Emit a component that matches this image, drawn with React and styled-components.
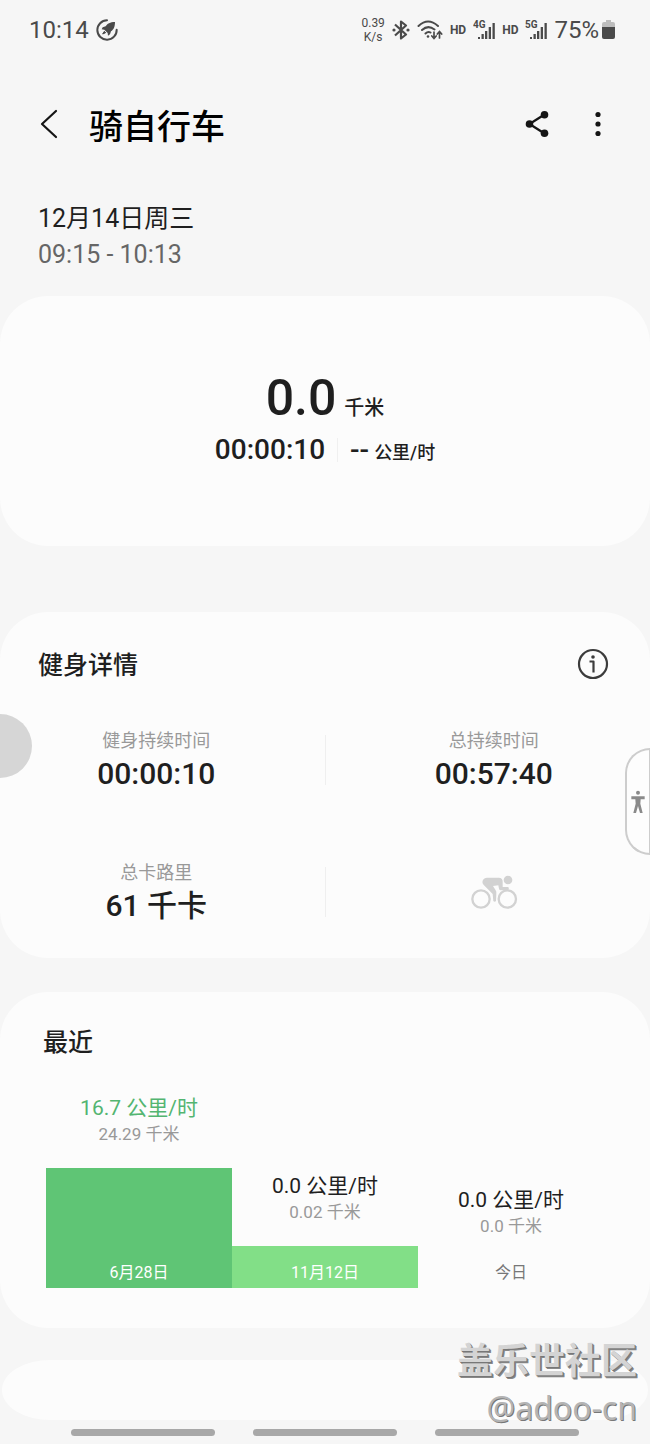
import React from 'react';
import styled, { createGlobalStyle } from 'styled-components';

const GlobalStyle = createGlobalStyle`
  * {
    box-sizing: border-box;
  }
  body {
    margin: 0;
    background: #f6f6f6;
    color: #1f1f1f;
    font-family: Roboto, 'Noto Sans CJK SC', sans-serif;
  }
  h1, h2, p, dl, dt, dd, ul {
    margin: 0;
    padding: 0;
    font-weight: 400;
  }
  svg {
    display: block;
    flex: none;
  }
`;

const Page = styled.div`
  position: relative;
  overflow: hidden;
`;

/* status bar */
const StatusBar = styled.div`
  display: flex;
  align-items: center;
  justify-content: space-between;
  height: 60px;
  padding: 0 35px 0 29px;
  color: #4a4a4a;
`;
const StatusGroup = styled.div`
  display: flex;
  align-items: center;
  gap: ${({ $gap }) => $gap}px;
`;
const Clock = styled.span`
  font-size: 24px;
  line-height: 28px;
`;
const Speed = styled.span`
  display: flex;
  flex-direction: column;
  align-items: center;
  font-size: 12px;
  line-height: 14px;
`;
const Hd = styled.span`
  font-size: 12px;
  font-weight: 700;
`;
const Battery = styled.span`
  display: flex;
  align-items: center;
  gap: 3px;
  font-size: 24px;
  line-height: 28px;
`;

/* header */
const Header = styled.header`
  display: flex;
  align-items: center;
  height: 128px;
  padding: 0 36px 0 33px;
`;
const IconButton = styled.button`
  display: flex;
  align-items: center;
  justify-content: center;
  width: 32px;
  height: 40px;
  padding: 0;
  border: 0;
  background: none;
  color: ${({ $color }) => $color || '#151515'};
  cursor: pointer;
`;
const Title = styled.h1`
  flex: 1;
  margin-left: 24px;
  padding-top: 6px;
  font-size: 34px;
  font-weight: 500;
  line-height: 48px;
  color: #000;
`;
const Actions = styled.div`
  display: flex;
  gap: 29px;
`;

const DateBlock = styled.div`
  padding: 13px 38px 23px;
  font-size: 25px;
  line-height: 36px;
`;
const TimeRange = styled.p`
  color: #666;
`;

/* cards */
const Card = styled.section`
  border-radius: 48px;
  background: #fcfcfc;
  margin-bottom: ${({ $gap }) => $gap || 0}px;
`;
const Summary = styled(Card)`
  display: flex;
  flex-direction: column;
  align-items: center;
  padding: 70px 20px 76px;
  font-weight: 500;
`;
const Distance = styled.p`
  font-size: 50px;
  font-weight: 500;
  line-height: 64px;
`;
const Unit = styled.span`
  margin-left: ${({ $space }) => $space}px;
  font-size: ${({ $size }) => $size}px;
  line-height: 1;
`;
const SummaryRow = styled.div`
  display: flex;
  align-items: center;
  font-size: 28px;
  line-height: 40px;
`;
const Pace = styled.span`
  margin-left: 12px;
  padding-left: 12px;
  border-left: 1px solid #f0f0f0;
  line-height: 24px;
`;

const Details = styled(Card)`
  padding: 32px 38px;
`;
const CardHead = styled.div`
  display: flex;
  align-items: center;
  justify-content: space-between;
  padding-right: 3px;
`;
const CardTitle = styled.h2`
  padding-top: 4px;
  font-size: 25px;
  font-weight: 500;
  line-height: 36px;
`;
const Stats = styled.dl`
  display: grid;
  grid-template-columns: 1fr 1px 1fr;
  column-gap: 50px;
  row-gap: 64px;
  margin-top: 42px;
`;
const Stat = styled.div`
  display: flex;
  flex-direction: column;
  align-items: center;
  justify-content: center;
  height: 68px;
`;
const StatLabel = styled.dt`
  padding-top: 2px;
  font-size: 18px;
  line-height: 26px;
  color: #999;
`;
const StatValue = styled.dd`
  font-size: 30px;
  font-weight: 500;
  line-height: 40px;
`;
const Divider = styled.i`
  height: 50px;
  align-self: center;
  background: #efefef;
`;

const Recent = styled(Card)`
  padding: 29px 43px 40px;
`;
const Chart = styled.ul`
  display: grid;
  grid-template-columns: repeat(3, 1fr);
  align-items: end;
  height: 207px;
  margin: 20px 3px 0;
  list-style: none;
`;
const Column = styled.li`
  text-align: center;
`;
const ColumnSpeed = styled.p`
  font-size: 21px;
  line-height: 28px;
  color: ${({ $best }) => ($best ? '#53b571' : '#1f1f1f')};
`;
const ColumnDistance = styled.p`
  margin-bottom: 21px;
  font-size: 17px;
  line-height: 25px;
  color: #999;
`;
const Bar = styled.div`
  display: flex;
  align-items: flex-end;
  justify-content: center;
  padding-bottom: 3px;
  background: ${({ $fill }) => $fill};
  color: ${({ $text }) => $text};
  font-size: 16px;
  line-height: 24px;
`;

const NextCard = styled(Card)`
  height: 60px;
  margin: 0 2px;
  border-radius: 48px / 30px;
`;

const NavBar = styled.nav`
  display: flex;
  gap: 38px;
  justify-content: center;
  padding: 9px 71px 8px;
`;
const NavPill = styled.button`
  flex: 1;
  max-width: 144px;
  height: 7px;
  padding: 0;
  border: 0;
  border-radius: 4px;
  background: #a8a8a8;
`;

/* floating things */
const FloatingDot = styled.button`
  position: absolute;
  top: 714px;
  left: -32px;
  width: 64px;
  height: 64px;
  border: 0;
  border-radius: 50%;
  background: #d6d6d6;
`;
const AccessTab = styled.button`
  position: absolute;
  top: 748px;
  right: 0;
  display: flex;
  align-items: center;
  justify-content: center;
  width: 25px;
  height: 107px;
  padding: 0;
  border: 2px solid #cdcdcd;
  border-right-width: 1px;
  border-radius: 25px 0 0 25px;
  background: #fdfdfd;
  color: #8a8a8a;
`;
const Watermark = styled.div`
  position: absolute;
  right: 13px;
  bottom: 14px;
  text-align: right;
  pointer-events: none;
`;
const WatermarkName = styled.p`
  font-size: 36px;
  font-weight: 700;
  line-height: 48px;
  color: #d4d4d4;
  text-shadow: 1px 1px 0 #777, 2px 2px 0 #888;
`;
const WatermarkUser = styled.p`
  font-family: 'Noto Sans', sans-serif;
  font-size: 32px;
  line-height: 44px;
  color: #b4b4b4;
  text-shadow: 1px 1px 0 #777;
`;

const RocketIcon = () => (
  <svg width="22" height="22" viewBox="0 0 66 66" fill="none">
    <path d="M33 4A29 29 0 1 0 62 32" stroke="currentColor" strokeWidth="6" strokeLinecap="round" />
    <path d="M57 9C42 9 34 14 29 22L20 25 17 31 25 32 35 42 36 50 42 46 45 37C53 32 57 24 57 9Z" fill="currentColor" />
    <path d="M25 37L20 45 29 41Z" fill="currentColor" stroke="currentColor" strokeWidth="3" />
  </svg>
);

const BluetoothIcon = () => (
  <svg width="18" height="20" viewBox="0 0 18 20" fill="none" stroke="currentColor" strokeWidth="2.2" strokeLinejoin="round">
    <path d="M3 4.5L14 14.5 9 18.5V1.5L14 5.5 3 15.5" />
    <circle cx="2" cy="10" r="1.6" fill="currentColor" stroke="none" />
    <circle cx="16" cy="10" r="1.6" fill="currentColor" stroke="none" />
  </svg>
);

const WifiIcon = () => (
  <svg width="26" height="20" viewBox="0 0 26 20" fill="none" stroke="currentColor" strokeWidth="2" strokeLinecap="round">
    <path d="M1.5 6Q11 -3 21 6M5 10Q11 4.5 17.5 9.5M8.5 13.5Q11 11 13.5 12.5" />
    <circle cx="11" cy="16.5" r="1.3" fill="currentColor" stroke="none" />
    <path d="M17 12v6M14.8 16L17 18.5 19.2 16M22.5 18v-6M20.3 14L22.5 11.5 24.7 14" strokeWidth="1.7" />
  </svg>
);

const SignalIcon = ({ label }) => (
  <svg width="22" height="20" viewBox="0 0 22 20" fill="currentColor">
    <text x="0" y="8" fontSize="10" fontWeight="700" fontFamily="Roboto, sans-serif">{label}</text>
    <rect x="5" y="17" width="2" height="2" />
    <rect x="8.5" y="14" width="2.3" height="5" />
    <rect x="12" y="11" width="2.3" height="8" />
    <rect x="15.7" y="7" width="2.3" height="12" />
    <rect x="19.5" y="3" width="2.3" height="16" />
  </svg>
);

const BatteryIcon = () => (
  <svg width="13" height="20" viewBox="0 0 13 20">
    <path d="M4 0H9V2H11Q13 2 13 4V8H0V4Q0 2 2 2H4Z" fill="#bdbdbd" />
    <path d="M0 7H13V17Q13 19 11 19H2Q0 19 0 17Z" fill="#4a4a4a" />
  </svg>
);

const BackIcon = () => (
  <svg width="18" height="30" viewBox="0 0 18 30" fill="none" stroke="currentColor" strokeWidth="2.2" strokeLinecap="round" strokeLinejoin="round">
    <path d="M16 2L2 15 16 28" />
  </svg>
);

const ShareIcon = () => (
  <svg width="24" height="28" viewBox="0 0 24 28" fill="currentColor">
    <path d="M19.5 4.5L4.5 14 19.5 23.5" fill="none" stroke="currentColor" strokeWidth="2.3" />
    <circle cx="4.5" cy="14" r="3.8" />
    <circle cx="19.5" cy="4.8" r="3.8" />
    <circle cx="19.5" cy="23.2" r="3.8" />
  </svg>
);

const MoreIcon = () => (
  <svg width="6" height="28" viewBox="0 0 6 28" fill="currentColor">
    <circle cx="3" cy="4.5" r="2.6" />
    <circle cx="3" cy="14" r="2.6" />
    <circle cx="3" cy="23.5" r="2.6" />
  </svg>
);

const InfoIcon = () => (
  <svg width="32" height="32" viewBox="0 0 32 32" fill="none" stroke="currentColor" strokeWidth="2.2">
    <circle cx="16" cy="16" r="14" />
    <path d="M12.5 13.5H16.5V24.5" strokeLinejoin="round" />
    <circle cx="16" cy="9" r="1.8" fill="currentColor" stroke="none" />
  </svg>
);

const BikeIcon = () => (
  <svg width="48" height="34" viewBox="0 0 144 102" fill="#d2d2d2">
    <circle cx="33" cy="72" r="26" fill="none" stroke="#d2d2d2" strokeWidth="7" />
    <circle cx="112" cy="72" r="26" fill="none" stroke="#d2d2d2" strokeWidth="7" />
    <circle cx="114" cy="15" r="13" />
    <path d="M51 8H86C95 8 98 13 98 20V36H115Q119 42 114 46H92Q88 46 87 41L85 31 69 33 77 46Q80 50 79 56L78 78Q74 83 70 78L68 57 42 31C32 20 40 9 51 8Z" />
  </svg>
);

const PersonIcon = () => (
  <svg width="14" height="24" viewBox="0 0 42 72" fill="currentColor">
    <circle cx="21" cy="8" r="6" />
    <path d="M1 19H41V28H29L28 41 35 69H27L21 48 15 69H7L14 41 13 28H1Z" />
  </svg>
);

const sessions = [
  { date: '6月28日', speed: '16.7 公里/时', distance: '24.29 千米', height: 120, fill: '#5fc575', text: '#fff', best: true },
  { date: '11月12日', speed: '0.0 公里/时', distance: '0.02 千米', height: 42, fill: '#82df87', text: '#fff' },
  { date: '今日', speed: '0.0 公里/时', distance: '0.0 千米', height: 28, fill: 'transparent', text: '#777' },
];

const App = () => (
  <Page lang="zh-CN">
    <GlobalStyle />
    <StatusBar>
      <StatusGroup $gap={7}>
        <Clock>10:14</Clock>
        <RocketIcon />
      </StatusGroup>
      <StatusGroup $gap={7}>
        <Speed>
          <span>0.39</span>
          <span>K/s</span>
        </Speed>
        <BluetoothIcon />
        <WifiIcon />
        <Hd>HD</Hd>
        <SignalIcon label="4G" />
        <Hd>HD</Hd>
        <SignalIcon label="5G" />
        <Battery>75%<BatteryIcon /></Battery>
      </StatusGroup>
    </StatusBar>

    <Header>
      <IconButton type="button" aria-label="返回"><BackIcon /></IconButton>
      <Title>骑自行车</Title>
      <Actions>
        <IconButton type="button" aria-label="分享"><ShareIcon /></IconButton>
        <IconButton type="button" aria-label="更多"><MoreIcon /></IconButton>
      </Actions>
    </Header>

    <DateBlock>
      <p>12月14日周三</p>
      <TimeRange>09:15 - 10:13</TimeRange>
    </DateBlock>

    <Summary $gap={66}>
      <Distance>0.0<Unit $size={20} $space={8}>千米</Unit></Distance>
      <SummaryRow>
        <span>00:00:10</span>
        <Pace>--<Unit $size={18} $space={5}>公里/时</Unit></Pace>
      </SummaryRow>
    </Summary>

    <Details $gap={34}>
      <CardHead>
        <CardTitle>健身详情</CardTitle>
        <IconButton type="button" aria-label="信息" $color="#3c3c3c"><InfoIcon /></IconButton>
      </CardHead>
      <Stats>
        <Stat>
          <StatLabel>健身持续时间</StatLabel>
          <StatValue>00:00:10</StatValue>
        </Stat>
        <Divider />
        <Stat>
          <StatLabel>总持续时间</StatLabel>
          <StatValue>00:57:40</StatValue>
        </Stat>
        <Stat>
          <StatLabel>总卡路里</StatLabel>
          <StatValue>61 千卡</StatValue>
        </Stat>
        <Divider />
        <Stat><BikeIcon /></Stat>
      </Stats>
    </Details>

    <Recent $gap={32}>
      <CardTitle>最近</CardTitle>
      <Chart>
        {sessions.map((item) => (
          <Column key={item.date}>
            <ColumnSpeed $best={item.best}>{item.speed}</ColumnSpeed>
            <ColumnDistance>{item.distance}</ColumnDistance>
            <Bar $fill={item.fill} $text={item.text} style={{ height: item.height }}>{item.date}</Bar>
          </Column>
        ))}
      </Chart>
    </Recent>

    <NextCard />

    <NavBar>
      <NavPill type="button" aria-label="最近任务" />
      <NavPill type="button" aria-label="主页" />
      <NavPill type="button" aria-label="后退" />
    </NavBar>

    <FloatingDot type="button" aria-label="悬浮按钮" />
    <AccessTab type="button" aria-label="辅助功能"><PersonIcon /></AccessTab>
    <Watermark>
      <WatermarkName>盖乐世社区</WatermarkName>
      <WatermarkUser>@adoo-cn</WatermarkUser>
    </Watermark>
  </Page>
);

export default App;
